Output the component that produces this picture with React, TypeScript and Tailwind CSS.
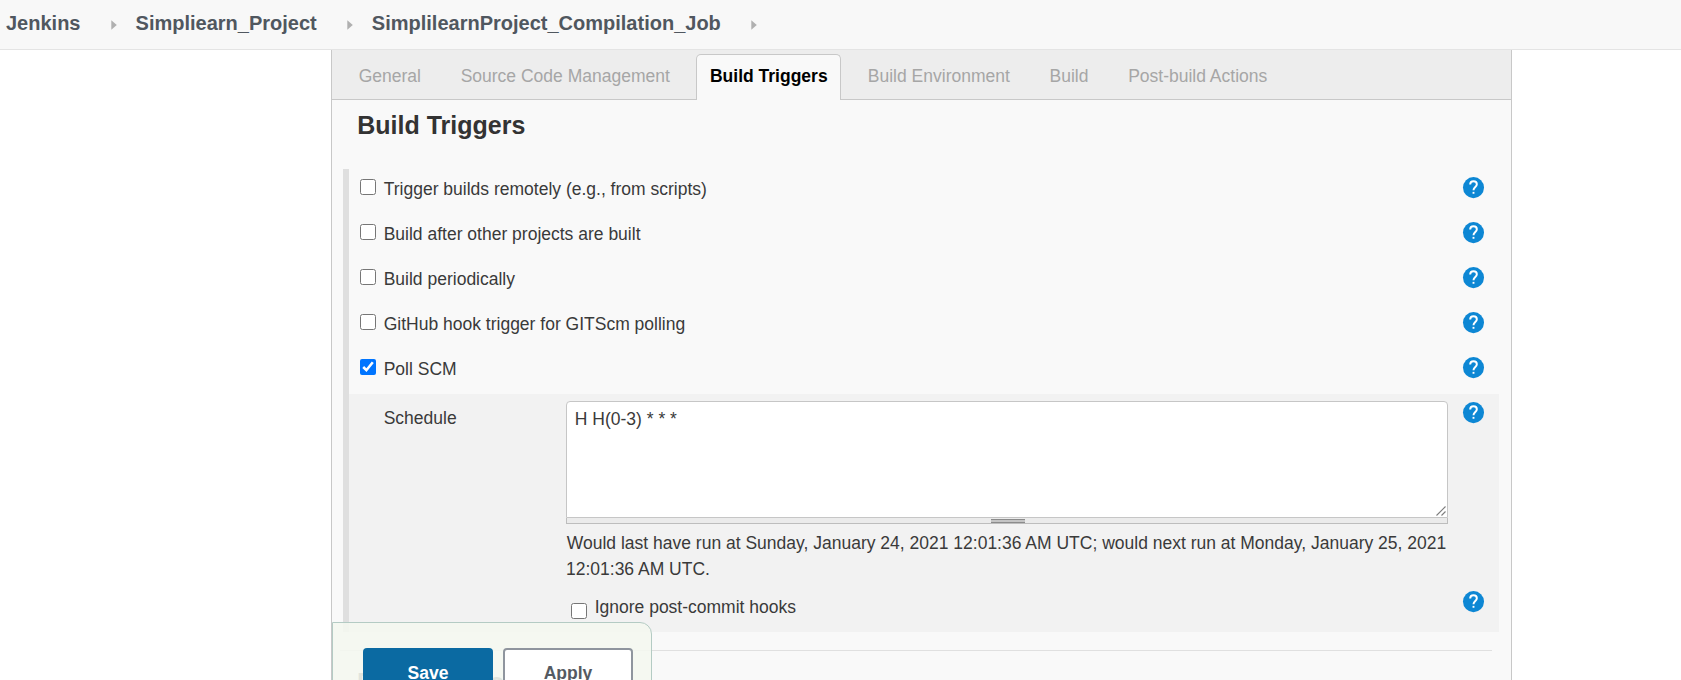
const jobs = ["Jenkins", "Simpliearn_Project", "SimplilearnProject_Compilation_Job"];

const tabs = [
  "General",
  "Source Code Management",
  "Build Triggers",
  "Build Environment",
  "Build",
  "Post-build Actions",
];

const triggers = [
  { label: "Trigger builds remotely (e.g., from scripts)", on: false },
  { label: "Build after other projects are built", on: false },
  { label: "Build periodically", on: false },
  { label: "GitHub hook trigger for GITScm polling", on: false },
  { label: "Poll SCM", on: true },
];

function HelpIcon() {
  return (
    <svg viewBox="0 0 24 24" className="size-[25px] shrink-0">
      <circle cx="12" cy="12.1" r="10.1" fill="#0d87d4" />
      <path
        d="M8.8 9.2C8.8 7.2 10.2 6 12 6s3.2 1.2 3.2 2.9c0 2.5-3.2 2.7-3.2 5.7"
        fill="none"
        stroke="#fff"
        strokeWidth="1.9"
      />
      <rect x="11.1" y="16.2" width="1.8" height="1.8" fill="#fff" />
    </svg>
  );
}

function Breadcrumbs() {
  return (
    <header className="flex h-[50px] shrink-0 items-center border-b border-[#e4e4e4] bg-[#f8f8f8] pb-[3px] pl-[6px] text-[20px] leading-[22px] font-bold text-[#50575f]">
      {jobs.map((job) => (
        <div key={job} className="flex items-center">
          <span>{job}</span>
          <svg viewBox="0 0 6 10" className="mt-[3px] mr-[18.8px] ml-[30.3px] h-[10px] w-[6px]">
            <path d="M0.3 0.2 5.8 5 0.3 9.8Z" fill="#b0b0b0" />
          </svg>
        </div>
      ))}
    </header>
  );
}

function TabBar() {
  return (
    <nav className="flex h-[50px] items-end gap-[13.7px] border-b border-[#c8c8c8] bg-[#ededed] pl-[13.7px]">
      {tabs.map((tab) =>
        tab === "Build Triggers" ? (
          <div
            key={tab}
            className="-mb-px h-[46px] rounded-t-[5px] border border-b-0 border-[#c8c8c8] bg-[#f9f9f9] px-[12.5px] pt-[11px] font-bold text-black"
          >
            {tab}
          </div>
        ) : (
          <div key={tab} className="h-[45px] px-[13px] pt-[12px] text-[#a6a6a6]">
            {tab}
          </div>
        ),
      )}
    </nav>
  );
}

function TriggerRow({ label, on }: { label: string; on: boolean }) {
  return (
    <div className="flex h-[45px] items-start pr-[13px] pl-[11px]">
      <input type="checkbox" defaultChecked={on} className="mt-[10px] mr-[7.7px] size-4" />
      <span className="flex-1 pt-[10px]">{label}</span>
      <div className="pt-[6px]">
        <HelpIcon />
      </div>
    </div>
  );
}

function SchedulePanel() {
  return (
    <div className="h-[238px] bg-[#f2f2f2] pr-[13px] pl-[34.7px]">
      <div className="flex items-start">
        <div className="w-[182.3px] shrink-0 pt-[14px]">Schedule</div>
        <div className="w-[882px] pt-[7px]">
          <div className="relative">
            <textarea
              defaultValue="H H(0-3) * * *"
              className="block h-[117px] w-full resize-none rounded-[4px] rounded-b-none border border-[#c6c6c6] bg-white px-[7.8px] pt-[7px] leading-[20px]"
            />
            <svg viewBox="0 0 10 10" className="absolute right-[2px] bottom-[2px] size-[10px]">
              <path d="M0.5 9.5 9.5 0.5M5.5 9.5 9.5 5.5" stroke="#7d7d7d" strokeWidth="1.1" fill="none" />
            </svg>
          </div>
          <div className="flex h-[6px] justify-center border border-t-0 border-[#bdbdbd] bg-[#ebebeb] pl-[2px]">
            <div className="mt-[1px] h-[4px] w-[34px] border-y border-[#8c8c8c] bg-[#c4c4c4]" />
          </div>
          <p className="-mr-2 pt-[6px] leading-[26px]">
            <span className="pl-[0.8px]">
              Would last have run at Sunday, January 24, 2021 12:01:36 AM UTC; would next run at Monday, January 25,
              2021 12:01:36 AM UTC.
            </span>
          </p>
        </div>
        <div className="ml-auto pt-[6px]">
          <HelpIcon />
        </div>
      </div>
      <div className="flex items-start pt-[7px] pl-[187.3px]">
        <input type="checkbox" className="mt-[14px] mr-[7.7px] size-4" />
        <span className="flex-1 pt-[8px]">Ignore post-commit hooks</span>
        <HelpIcon />
      </div>
    </div>
  );
}

function SaveBar() {
  return (
    <div className="absolute top-[622px] left-[332px] flex h-[80px] w-[320px] gap-[10px] rounded-tr-[12px] border border-[#b4cbc4] bg-[#f4f7f0]/90 pt-[25px] pl-[30px] font-bold">
      <div className="h-[50px] w-[130px] rounded-[4px] bg-[#0b6aa2] pt-[15px] text-center text-white">Save</div>
      <div className="h-[50px] w-[130px] rounded-[4px] border-2 border-[#8f959e] bg-white pt-[13px] text-center text-[#555a62]">
        Apply
      </div>
    </div>
  );
}

export default function App() {
  return (
    <div className="relative flex h-[680px] w-[1681px] flex-col overflow-hidden bg-white font-['Liberation_Sans',Arial,sans-serif] text-[17.5px] leading-[20px] text-[#3a3a3a]">
      <Breadcrumbs />
      <main className="ml-[331px] h-[630px] w-[1181px] overflow-hidden border-x border-[#c8c8c8] bg-[#f9f9f9]">
        <TabBar />
        <h1 className="h-[69px] pt-[11px] pl-[25.3px] text-[25px] leading-[29px] font-bold text-[#333]">Build Triggers</h1>
        <section className="mr-[12px] ml-[11px] border-l-[6px] border-[#dfdfdf]">
          {triggers.map((t) => (
            <TriggerRow key={t.label} {...t} />
          ))}
          <SchedulePanel />
        </section>
        <hr className="mt-[18px] mr-[19px] ml-[8px] border-[#e0e0e0]" />
        <h1 className="pt-[17px] pl-[25px] text-[25px] leading-[29px] font-bold text-[#333]">Build Environment</h1>
      </main>
      <SaveBar />
    </div>
  );
}
